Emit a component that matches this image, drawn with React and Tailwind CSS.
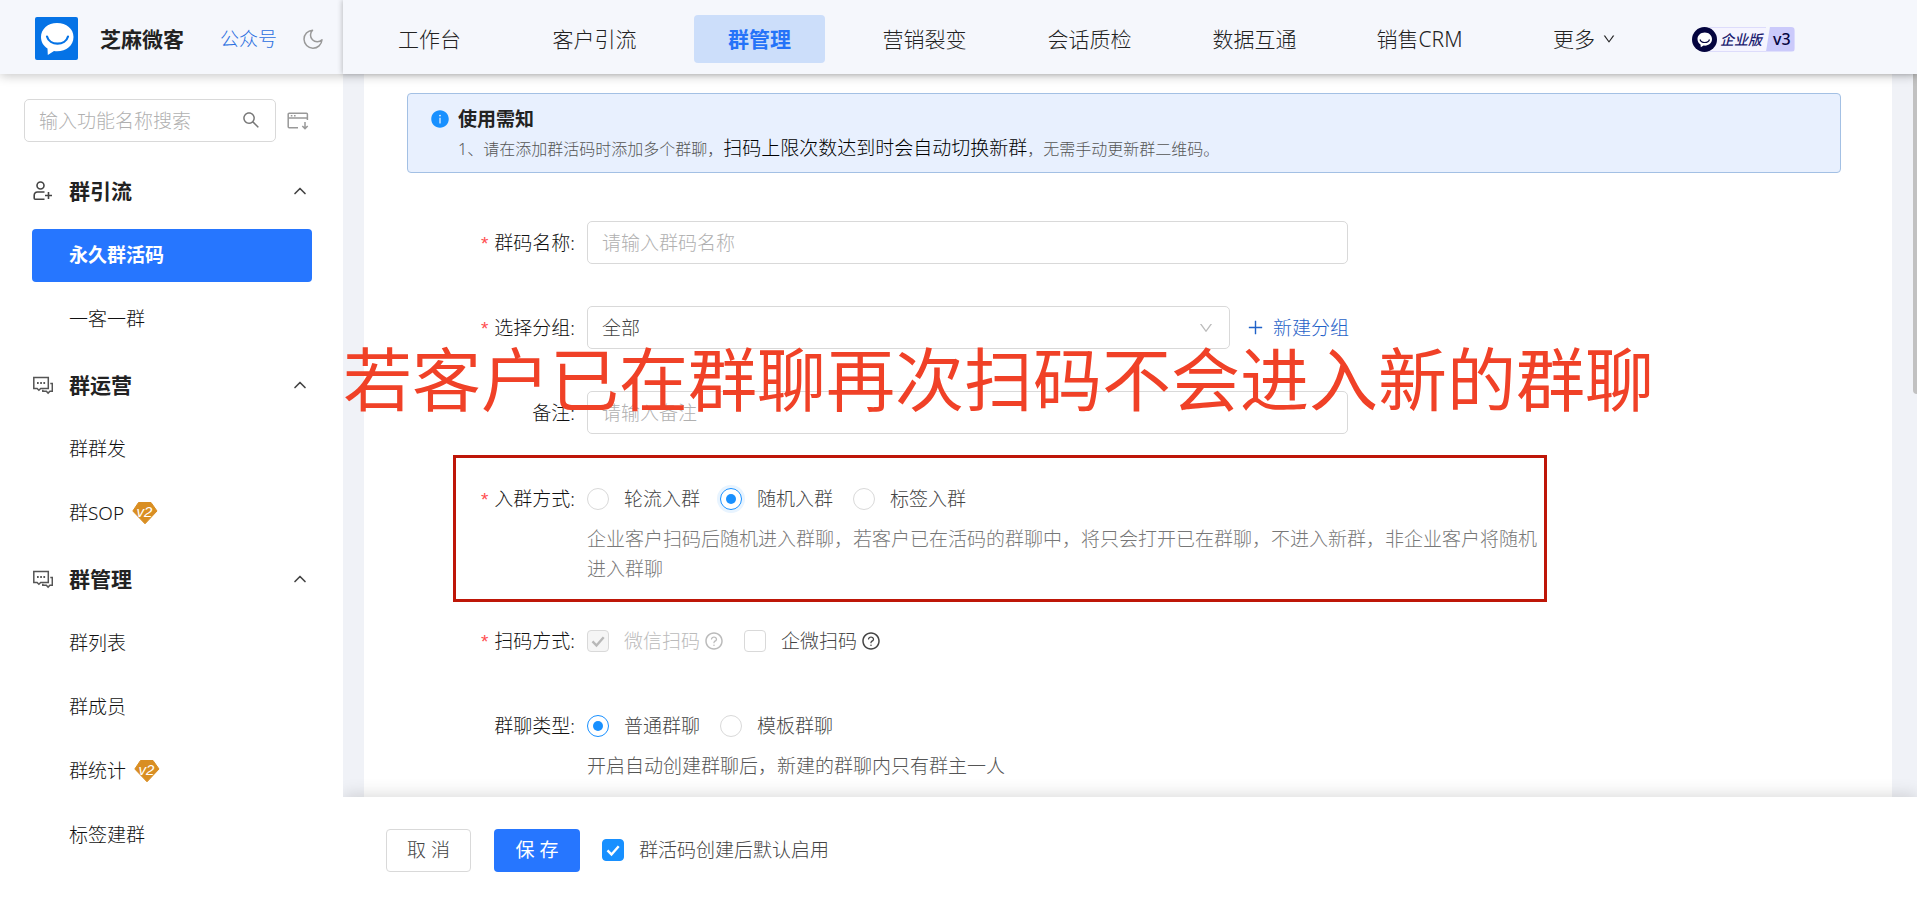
import React, { useState } from 'react';
import {
  AiFillInfoCircle,
  AiOutlineDown,
  AiOutlinePlus,
  AiOutlineQuestionCircle,
  AiOutlineSearch
} from 'react-icons/ai';
import { ChevronUp } from 'lucide-react';

const navItems = ['工作台', '客户引流', '群管理', '营销裂变', '会话质检', '数据互通', '销售CRM'];

const menu = [
  {
    title: '群引流',
    icon: 'user',
    items: [{ name: '永久群活码', active: true }, { name: '一客一群' }]
  },
  {
    title: '群运营',
    icon: 'chat',
    items: [{ name: '群群发' }, { name: '群SOP', v2: true }]
  },
  {
    title: '群管理',
    icon: 'chat',
    items: [{ name: '群列表' }, { name: '群成员' }, { name: '群统计', v2: true }, { name: '标签建群' }]
  }
];

const LogoIcon = () => (
  <svg viewBox="0 0 43 43" className="h-[43px] w-[43px]" aria-hidden="true">
    <rect width="43" height="43" rx="2" fill="#0573e6" />
    <path d="M22 6C12.800 6 6 12.200 6 20c0 5 2.500 9 6.500 11.500L12.800 38l6.200-4c1 .2 2 .3 3 .3 9.500 0 16.500-6 16.500-14.300S31.500 6 22 6z" fill="#fff" />
    <path d="M12 19.500c2.500 9.500 18.500 9.500 21 0" fill="none" stroke="#0573e6" strokeWidth="2.200" strokeLinecap="round" />
  </svg>
);

const MoonIcon = () => (
  <svg viewBox="0 0 20 20" className="h-5 w-5" fill="none" stroke="#999" strokeWidth="1.500" strokeLinejoin="round" aria-hidden="true">
    <path d="M9.500 1.200A9 9 0 1 0 19 10.800 5.800 5.800 0 1 1 9.500 1.200z" />
  </svg>
);

const PanelIcon = () => (
  <svg viewBox="0 0 22 18" className="h-[18px] w-[22px]" fill="none" stroke="#999" strokeWidth="1.500" aria-hidden="true">
    <path d="M11 15.800H2.200A1 1 0 0 1 1.200 14.800V2.200a1 1 0 0 1 1-1h17.200a1 1 0 0 1 1 1V8M1.200 6h19.200" />
    <path d="M3.800 3.700h1.600M7 3.700h1.600M18 10v6.500M15.300 14l2.700 2.600 2.700-2.600" />
  </svg>
);

const UserIcon = () => (
  <svg viewBox="0 0 20 20" className="h-5 w-5" fill="none" stroke="#444" strokeWidth="1.600" aria-hidden="true">
    <circle cx="8.500" cy="4.500" r="3.500" />
    <path d="M12.500 11H5.500A3.500 3.500 0 0 0 2.200 14.500V17.200a1 1 0 0 0 1 1H12.500" />
    <path d="M16.500 11v7M13 14.500h7" />
  </svg>
);

const ChatIcon = () => (
  <svg viewBox="0 0 21 19" className="h-[19px] w-[21px]" fill="none" stroke="#555" strokeWidth="1.500" aria-hidden="true">
    <path d="M1.800 1.500h14.500v11H8.700l-1.800 1.800-1.800-1.800H1.800z" />
    <path d="M18.300 7.500h2v7.800h-2.400l-1.800 1.800-1.800-1.800h-3.500v-1.500" />
    <path d="M5 7h1.700M8.200 7h1.700M11.400 7h1.700" strokeWidth="1.800" />
  </svg>
);

const V2Badge = () => (
  <svg viewBox="0 0 26 24" className="ml-2 h-6 w-[26px]" role="img" aria-label="V2">
    <path d="M6.500 1.500h12.500l6 8.500-12 12.800L.8 10z" fill="#d98e22" stroke="#d98e22" strokeLinejoin="round" />
    <text x="12.500" y="16" textAnchor="middle" fontSize="15" fontStyle="italic" fill="#fff" fontFamily="'Liberation Sans', sans-serif">v2</text>
  </svg>
);

const VersionBadge = () => (
  <div className="flex h-[25px] items-center text-[14px] font-medium leading-[23px] text-[#1c1c70]">
    <svg viewBox="0 0 25 25" className="z-10 h-[25px] w-[25px]" aria-hidden="true">
      <circle cx="12.500" cy="12.500" r="12.500" fill="#04043f" />
      <path d="M12.800 5.500c-4.300 0-7.300 2.900-7.300 6.600 0 2.500 1.200 4.300 3 5.500l.3 2.700 2.800-1.700c4.800.6 8.400-2.200 8.400-6.500 0-3.700-3-6.600-7.200-6.600z" fill="#fff" />
      <path d="M8 12.500c1.300 4 8.200 4 9.500 0" fill="none" stroke="#04043f" strokeWidth="1.200" />
    </svg>
    <span className="-ml-2 h-[25px] border-y border-[#dddcfb] bg-[#f5f4ff] pl-[11px] pr-1 italic">企业版</span>
    <span className="h-[25px] rounded-r-sm bg-[#cbcafb] pl-[7px] pr-1 text-[16px] leading-[25px] text-[#06063f] [clip-path:polygon(4px_0,100%_0,100%_100%,0_100%)]">v3</span>
  </div>
);

const Tick = ({ className }) => (
  <svg viewBox="0 0 22 22" className={`pointer-events-none absolute inset-0 h-[22px] w-[22px] ${className}`} fill="none" stroke="currentColor" strokeWidth="2.400" aria-hidden="true">
    <path d="M5.500 11.300l4 4.200 7.200-8.300" />
  </svg>
);

const Checkbox = ({ label, help, disabled, defaultChecked }) => (
  <div className={`flex items-center ${disabled ? 'text-[#bbb]' : 'text-[#444]'}`}>
    <label className="flex items-center gap-[15px]">
      <span className="relative h-[22px] w-[22px]">
        <input
          type="checkbox"
          disabled={disabled}
          defaultChecked={defaultChecked}
          className="peer block h-[22px] w-[22px] appearance-none rounded-sm border border-[#d9d9d9] bg-white checked:border-[#1890ff] checked:bg-[#1890ff] disabled:border-[#d9d9d9] disabled:bg-[#f5f5f5]"
        />
        <Tick className="hidden text-white peer-checked:block peer-disabled:text-[#b8b8b8]" />
      </span>
      {label}
    </label>
    {help && <AiOutlineQuestionCircle className="ml-1 h-5 w-5" />}
  </div>
);

const Radio = ({ name, label, focused, checked, onChange }) => (
  <label className="flex items-center gap-[15px] text-[#444]">
    <span className={`relative h-[22px] w-[22px] rounded-full ${focused ? 'ring-3 ring-[#e8f4ff]' : ''}`}>
      <input
        type="radio"
        name={name}
        checked={checked}
        onChange={onChange}
        className="peer block h-[22px] w-[22px] appearance-none rounded-full border border-[#d9d9d9] bg-white checked:border-[#1890ff]"
      />
      <span className="pointer-events-none absolute inset-[6px] hidden rounded-full bg-[#1890ff] peer-checked:block" />
    </span>
    {label}
  </label>
);

const FormRow = ({ label, required, htmlFor, className = '', children }) => (
  <div className={`flex max-w-[1094px] border-x-[3px] ${className || 'border-transparent'}`}>
    <div className="flex h-[43px] w-[131px] shrink-0 items-center justify-end pr-3 text-[#111]">
      {required && <span className="mr-1 pt-1 font-['Liberation_Mono',monospace] font-normal text-[#ff4d4f]">*</span>}
      <label htmlFor={htmlFor}>{label}:</label>
    </div>
    <div className="min-w-0 flex-1">{children}</div>
  </div>
);

const inputClass = 'block h-[43px] w-full rounded-[5px] border border-[#d9d9d9] bg-white px-[14px] placeholder-[#b0b0b0] outline-none';

const Header = () => (
  <header className="relative z-20 flex h-[74px] shrink-0 bg-[#f5f7fc] shadow-[0_2px_10px_rgba(0,0,0,0.22)]">
    <div className="flex w-[343px] shrink-0 items-center pl-[35px] pt-[3px]">
      <LogoIcon />
      <h1 className="ml-[22px] text-[21px] font-bold text-[#222]">芝麻微客</h1>
      <a href="#" className="ml-9 text-[#2a6fe0]">公众号</a>
      <button type="button" aria-label="深色模式" className="ml-[26px]">
        <MoonIcon />
      </button>
    </div>
    <nav className="flex flex-1 items-center gap-[34px] pl-[21px] pt-1 text-[21px] text-[#222] shadow-[-1px_0_5px_rgba(0,0,0,0.22)]">
      {navItems.map((name) => (
        <a
          key={name}
          href="#"
          className={`flex h-12 w-[131px] items-center justify-center rounded-sm ${name === '群管理' ? 'bg-[#ccdefa] font-bold text-[#2573f8]' : ''}`}
        >
          {name}
        </a>
      ))}
      <button type="button" className="flex h-12 w-[131px] items-center justify-center gap-[7px]">
        更多
        <AiOutlineDown className="h-[14px] w-[14px]" />
      </button>
      <div className="ml-2">
        <VersionBadge />
      </div>
    </nav>
  </header>
);

const Sidebar = () => (
  <aside className="w-[343px] shrink-0 overflow-hidden bg-white pt-[25px]">
    <div className="flex items-center gap-[11px] pl-6">
      <div className="relative w-[252px]">
        <input type="text" aria-label="功能搜索" placeholder="输入功能名称搜索" className={inputClass} />
        <AiOutlineSearch className="absolute right-[15px] top-[11px] h-5 w-5 text-[#777]" />
      </div>
      <button type="button" aria-label="收起面板">
        <PanelIcon />
      </button>
    </div>
    <div className="mt-[17px] flex flex-col gap-[2px]">
      {menu.map((group) => (
        <div key={group.title}>
          <button type="button" className="flex h-16 w-full items-center pl-8 pr-[33px]">
            <span className="w-[37px] text-left">{group.icon === 'user' ? <UserIcon /> : <ChatIcon />}</span>
            <span className="flex-1 text-left text-[21px] font-bold text-[#222]">{group.title}</span>
            <ChevronUp className="h-5 w-5 text-[#444]" strokeWidth={2} />
          </button>
          {group.items.map((item) => (
            <div key={item.name} className="flex h-16 items-center pl-8 pr-[31px]">
              <a
                href="#"
                className={`flex h-[53px] flex-1 items-center rounded-sm pl-[37px] ${item.active ? 'bg-[#2676ff] font-bold text-white' : 'text-[#111]'}`}
              >
                {item.name}
                {item.v2 && <V2Badge />}
              </a>
            </div>
          ))}
        </div>
      ))}
    </div>
  </aside>
);

const App = () => {
  const [joinMode, setJoinMode] = useState('随机入群');
  const [chatType, setChatType] = useState('普通群聊');

  return (
    <div className="flex h-screen flex-col overflow-hidden bg-white font-['Noto_Sans','Noto_Sans_CJK_SC',sans-serif] text-[19px] font-light leading-[30px] text-[#444]">
      <Header />
      <div className="flex min-h-0 flex-1">
        <Sidebar />
        <main className="relative flex min-w-0 flex-1 flex-col overflow-hidden">
          <div className="flex min-h-0 flex-1 overflow-hidden bg-[#f0f2f7] pl-[21px]">
            <div className="min-w-0 flex-1 bg-white pl-[43px] pr-[51px] pt-[19px]">
              <section className="rounded-sm border border-[#a3c0e4] bg-[#e8f0fe] pb-[9px] pl-[22px] pt-[10px]">
                <h2 className="flex items-center gap-2 font-bold text-[#222]">
                  <AiFillInfoCircle className="h-5 w-5 text-[#1890ff]" />
                  使用需知
                </h2>
                <p className="pl-7 text-[16px] leading-7 text-[#555]">
                  1、请在添加群活码时添加多个群聊，<span className="text-[19px] text-black">扫码上限次数达到时会自动切换新群</span>，无需手动更新群二维码。
                </p>
              </section>

              <form id="code-form" className="-ml-[43px] mt-12 pl-[89px]" onSubmit={(e) => e.preventDefault()}>
                <div className="flex flex-col gap-[42px]">
                  <FormRow label="群码名称" htmlFor="code-name" required>
                    <input id="code-name" type="text" placeholder="请输入群码名称" className={`${inputClass} max-w-[761px]`} />
                  </FormRow>
                  <FormRow label="选择分组" htmlFor="code-group" required>
                    <div className="flex items-center">
                      <div className="relative w-[643px]">
                        <select id="code-group" className={`${inputClass} appearance-none`}>
                          <option>全部</option>
                        </select>
                        <AiOutlineDown className="pointer-events-none absolute right-4 top-[14px] h-4 w-4 text-[#bbb]" />
                      </div>
                      <button type="button" className="ml-4 flex items-center gap-2 text-[#1f62c8]">
                        <AiOutlinePlus className="h-[19px] w-[19px]" />
                        新建分组
                      </button>
                    </div>
                  </FormRow>
                  <FormRow label="备注" htmlFor="code-remark">
                    <input id="code-remark" type="text" placeholder="请输入备注" className={`${inputClass} max-w-[761px]`} />
                  </FormRow>
                </div>

                <FormRow label="入群方式" required className="mt-[21px] border-y-[3px] border-[#be1608] pb-[15px] pt-[19px]">
                  <div className="flex h-[43px] items-center gap-5">
                    {['轮流入群', '随机入群', '标签入群'].map((mode) => (
                      <Radio
                        key={mode}
                        name="joinMode"
                        label={mode}
                        checked={joinMode === mode}
                        focused={joinMode === mode}
                        onChange={() => setJoinMode(mode)}
                      />
                    ))}
                  </div>
                  <p className="mt-1 text-[#777]">
                    企业客户扫码后随机进入群聊，若客户已在活码的群聊中，将只会打开已在群聊，不进入新群，非企业客户将随机进入群聊
                  </p>
                </FormRow>

                <div className="mt-[17px] flex flex-col gap-[42px]">
                  <FormRow label="扫码方式" required>
                    <div className="flex h-[43px] items-center gap-5">
                      <Checkbox label="微信扫码" help disabled defaultChecked />
                      <Checkbox label="企微扫码" help />
                    </div>
                  </FormRow>
                  <FormRow label="群聊类型">
                    <div className="flex h-[43px] items-center gap-5">
                      {['普通群聊', '模板群聊'].map((type) => (
                        <Radio
                          key={type}
                          name="chatType"
                          label={type}
                          checked={chatType === type}
                          onChange={() => setChatType(type)}
                        />
                      ))}
                    </div>
                    <p className="mt-1 text-[#555]">开启自动创建群聊后，新建的群聊内只有群主一人</p>
                  </FormRow>
                </div>
              </form>
            </div>
            {/* scroll track */}
            <div className="flex w-[25px] shrink-0 justify-end">
              <div className="h-80 w-1 rounded-bl-sm bg-[#c1c1c1]" />
            </div>
          </div>

          <footer className="relative z-10 flex h-[102px] shrink-0 items-center bg-white pl-[43px] pt-1 shadow-[0_-2px_16px_rgba(0,0,0,0.15)]">
            <button type="button" className="h-[43px] w-[85px] rounded-sm border border-[#d9d9d9] bg-white">取 消</button>
            <button type="submit" form="code-form" className="ml-[23px] mr-[22px] h-[43px] w-[86px] rounded-sm bg-[#2676ff] font-normal text-white">保 存</button>
            <Checkbox label="群活码创建后默认启用" defaultChecked />
          </footer>

          <p className="pointer-events-none absolute left-0 top-[257px] z-10 whitespace-nowrap text-[69px] font-normal leading-[96px] text-[#f04127]">
            若客户已在群聊再次扫码不会进入新的群聊
          </p>
        </main>
      </div>
    </div>
  );
};

export default App;
